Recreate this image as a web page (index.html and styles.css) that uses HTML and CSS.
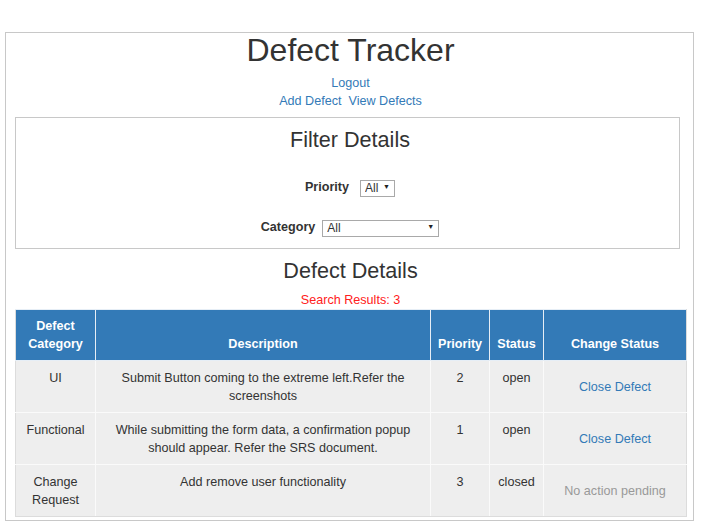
FILE: index.html
```html
<!DOCTYPE html>
<html>
<head>
<meta charset="utf-8">
<link rel="stylesheet" href="styles.css">
</head>
<body>
<div class="page">
  <h1 class="title">Defect Tracker</h1>
  <div class="nav">
    <div><a href="#">Logout</a></div>
    <div><a href="#">Add Defect</a>&nbsp; <a href="#">View Defects</a></div>
  </div>
  <div class="filter">
    <h3 class="section-title">Filter Details</h3>
    <div class="form-row priority-row">
      <label>Priority</label>
      <span class="sel sel-priority"><select><option>All</option></select></span>
    </div>
    <div class="form-row category-row">
      <label>Category</label>
      <span class="sel sel-category"><select><option>All</option></select></span>
    </div>
  </div>
  <h3 class="section-title details-title">Defect Details</h3>
  <div class="results">Search Results: 3</div>
  <table class="defects">
    <colgroup>
      <col class="c1"><col class="c2"><col class="c3"><col class="c4"><col class="c5">
    </colgroup>
    <thead>
      <tr>
        <th>Defect Category</th>
        <th>Description</th>
        <th>Priority</th>
        <th>Status</th>
        <th>Change Status</th>
      </tr>
    </thead>
    <tbody>
      <tr>
        <td>UI</td>
        <td>Submit Button coming to the extreme left.Refer the screenshots</td>
        <td>2</td>
        <td>open</td>
        <td class="action"><a href="#">Close Defect</a></td>
      </tr>
      <tr>
        <td>Functional</td>
        <td>While submitting the form data, a confirmation popup should appear. Refer the SRS document.</td>
        <td>1</td>
        <td>open</td>
        <td class="action"><a href="#">Close Defect</a></td>
      </tr>
      <tr>
        <td>Change Request</td>
        <td>Add remove user functionality</td>
        <td>3</td>
        <td>closed</td>
        <td class="action pending">No action pending</td>
      </tr>
    </tbody>
  </table>
</div>
</body>
</html>
```
FILE: styles.css
```css
* { box-sizing: border-box; }
html, body { background: #fff; }
body {
  margin: 0;
  font-family: "Liberation Sans", Arial, sans-serif;
  font-size: 12.6px;
  line-height: 18px;
  color: #333;
}
a { color: #337ab7; text-decoration: none; }

.page {
  margin: 32px 0 0 5px;
  width: 689px;
  height: 489px;
  border: 1px solid #c8c8c8;
  padding: 0 7px 0 9px;
}
.title {
  margin: 0;
  font-size: 32px;
  font-weight: normal;
  line-height: 35px;
  text-align: center;
}
.nav {
  margin-top: 6px;
  text-align: center;
}
.filter {
  margin-top: 7px;
  width: 665px;
  height: 132px;
  border: 1px solid #c8c8c8;
  padding: 10px 0 0 5px;
}
.section-title {
  margin: 0;
  font-size: 21.6px;
  font-weight: normal;
  line-height: 24px;
  text-align: center;
}
.form-row {
  display: flex;
  justify-content: center;
  align-items: center;
  height: 18px;
}
.form-row label { font-weight: bold; }
.priority-row { margin-top: 26px; gap: 11px; }
.category-row { margin-top: 22px; gap: 7px; }
.sel { position: relative; display: inline-block; height: 17px; }
.sel select {
  -webkit-appearance: none;
  appearance: none;
  height: 17px;
  border: 1px solid #a9a9a9;
  border-radius: 0;
  background: #fff;
  font-family: "Liberation Sans", Arial, sans-serif;
  font-size: 12px;
  color: #333;
  padding: 0 0 0 4px;
  margin: 0;
  line-height: 15px;
}
.sel-priority select { width: 35px; }
.sel-category select { width: 117px; }
.sel::after {
  content: "\25BC";
  position: absolute;
  right: 5px;
  top: 3px;
  font-size: 7px;
  line-height: 10px;
  color: #222;
  pointer-events: none;
}
.details-title { margin-top: 10px; }
.results {
  margin-top: 8px;
  text-align: center;
  color: #ff2020;
}
.defects {
  margin-top: 0;
  width: 671px;
  border-collapse: collapse;
  table-layout: fixed;
  border: 1px solid #dcdcdc;
}
.c1 { width: 80px; }
.c2 { width: 335px; }
.c3 { width: 59px; }
.c4 { width: 54px; }
.c5 { width: 143px; }
.defects th, .defects td {
  padding: 7px;
  text-align: center;
  border: 1px solid #fff;
}
.defects th {
  background: #337ab7;
  color: #fff;
  font-weight: bold;
  vertical-align: bottom;
  height: 50px;
  border-color: #e6eef6;
}
.defects td {
  background: #eeeeee;
  vertical-align: top;
  height: 51.5px;
  padding-top: 8px;
  border-color: #fafafa;
}
.defects tr > :first-child { border-left-color: #dcdcdc; }
.defects tr > :last-child { border-right-color: #dcdcdc; }
.defects tbody tr:last-child td { border-bottom-color: #dcdcdc; }
.defects td.action { vertical-align: middle; padding-top: 7px; }
.defects td.pending { color: #999; }
```
